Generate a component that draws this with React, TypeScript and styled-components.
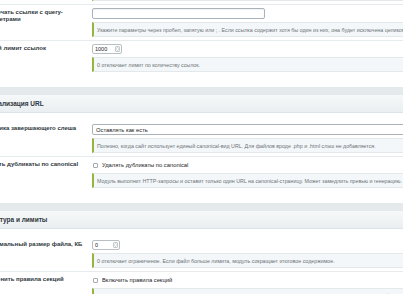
import React from "react";
import styled, { createGlobalStyle } from "styled-components";

const Global = createGlobalStyle`
  html, body { margin: 0; padding: 0; background: #e4e9ec; overflow: hidden; }
  body { font-family: "Liberation Sans", Arial, sans-serif; }
  #root { width: 403px; height: 294px; overflow: hidden; }
`;

const Page = styled.div`
  width: 760px;
  margin: -17px 0 0 -27px;
  display: flex;
  flex-direction: column;
  gap: 8px;
`;

const Section = styled.section`
  background: #fff;
`;

const SectionHeader = styled.div`
  height: 18px;
  box-sizing: border-box;
  display: flex;
  align-items: center;
  padding-left: 8px;
  background: linear-gradient(#f6f8f9, #eaeff1);
  border-bottom: 1px solid #dde4e7;
  font-weight: bold;
  font-size: 6.5px;
  color: #2f373c;
`;

const SectionBody = styled.div<{ $cont?: boolean }>`
  padding: ${(p) => (p.$cont ? 0 : 8)}px 0 12px;
`;

const Row = styled.div<{ $last?: boolean }>`
  display: grid;
  grid-template-columns: 119px 1fr;
  padding: 3px 0;
  border-bottom: ${(p) => (p.$last ? "none" : "1px solid #e6ebee")};
`;

const Label = styled.div`
  padding: 1px 6px 0 8px;
  font-size: 6px;
  line-height: 6.6px;
  font-weight: bold;
  color: #2f373c;
`;

const Field = styled.div`
  display: flex;
  flex-direction: column;
  gap: 3px;
  min-width: 0;
`;

const TextInput = styled.div`
  width: 173px;
  height: 11px;
  box-sizing: border-box;
  border: 1px solid #aab3b9;
  border-radius: 2px;
  background: #fff;
  box-shadow: inset 0 1px 1px rgba(0, 0, 0, 0.06);
`;

const NumberBox = styled.div<{ $w: number }>`
  width: ${(p) => p.$w}px;
  height: 10px;
  box-sizing: border-box;
  border: 1px solid #b7bfc4;
  border-radius: 2px;
  background: #fff;
  display: flex;
  align-items: center;
  justify-content: space-between;
  padding: 0 1px 0 2px;
  font-size: 5.5px;
  color: #222;
`;

const Spin = styled.span`
  width: 5px;
  height: 6px;
  box-sizing: border-box;
  border: 1px solid #c5ccd0;
  border-radius: 1px;
  display: flex;
  align-items: center;
  justify-content: center;
`;

const Select = styled.div`
  height: 11px;
  box-sizing: border-box;
  border: 1px solid #aab3b9;
  border-radius: 2px;
  background: #fff;
  display: flex;
  align-items: center;
  padding-left: 3px;
  font-size: 5.8px;
  color: #222;
`;

const Hint = styled.div`
  height: 15px;
  box-sizing: border-box;
  display: flex;
  align-items: center;
  padding-left: 3px;
  background: #f4f7f9;
  border: 1px solid #e3e8eb;
  border-left: 2px solid #95b53c;
  font-size: 5.3px;
  color: #6b7377;
  white-space: nowrap;
`;

const CheckLine = styled.label`
  height: 10px;
  display: flex;
  align-items: center;
  gap: 4px;
  padding-left: 1px;
  font-size: 5.8px;
  color: #222;
`;

const Box = styled.span`
  width: 5px;
  height: 5px;
  box-sizing: border-box;
  border: 1px solid #a3abb0;
  border-radius: 1px;
  background: #fff;
`;

function Spinner() {
  return (
    <Spin>
      <svg width="3" height="4" viewBox="0 0 3 4">
        <path d="M0.3 1.5 L1.5 0.4 L2.7 1.5 M0.3 2.5 L1.5 3.6 L2.7 2.5" stroke="#8d969b" strokeWidth="0.5" fill="none" />
      </svg>
    </Spin>
  );
}

export default function App() {
  return (
    <>
      <Global />
      <Page>
        <Section>
          <SectionBody $cont>
            <Row>
              <Label />
              <Field>
                <Hint>Ссылки на страницы из этого списка не попадут в карту.</Hint>
              </Field>
            </Row>
            <Row>
              <Label>
                Исключать ссылки с query-
                <br />
                параметрами
              </Label>
              <Field>
                <TextInput />
                <Hint>
                  Укажите параметры через пробел, запятую или ; . Если ссылка содержит хотя бы один из них, она будет исключена целиком.
                </Hint>
              </Field>
            </Row>
            <Row $last>
              <Label>Общий лимит ссылок</Label>
              <Field>
                <NumberBox $w={30}>
                  1000
                  <Spinner />
                </NumberBox>
                <Hint>0 отключает лимит по количеству ссылок.</Hint>
              </Field>
            </Row>
          </SectionBody>
        </Section>

        <Section>
          <SectionHeader>Нормализация URL</SectionHeader>
          <SectionBody>
            <Row>
              <Label>Политика завершающего слеша</Label>
              <Field>
                <Select>Оставлять как есть</Select>
                <Hint>
                  Полезно, когда сайт использует единый canonical-вид URL. Для файлов вроде .php и .html слэш не добавляется.
                </Hint>
              </Field>
            </Row>
            <Row $last>
              <Label>Удалять дубликаты по canonical</Label>
              <Field>
                <CheckLine>
                  <Box />
                  Удалять дубликаты по canonical
                </CheckLine>
                <Hint>
                  Модуль выполнит HTTP-запросы и оставит только один URL на canonical-страницу. Может замедлить превью и генерацию.
                </Hint>
              </Field>
            </Row>
          </SectionBody>
        </Section>

        <Section>
          <SectionHeader>Структура и лимиты</SectionHeader>
          <SectionBody>
            <Row>
              <Label>Максимальный размер файла, КБ</Label>
              <Field>
                <NumberBox $w={28}>
                  0
                  <Spinner />
                </NumberBox>
                <Hint>0 отключает ограничение. Если файл больше лимита, модуль сокращает итоговое содержимое.</Hint>
              </Field>
            </Row>
            <Row $last>
              <Label>Применить правила секций</Label>
              <Field>
                <CheckLine>
                  <Box />
                  Включить правила секций
                </CheckLine>
                <Hint>
                  Если выключить, модуль перестанет раскладывать ссылки по пользовательским секциям и соберёт их в стандартный список.
                </Hint>
              </Field>
            </Row>
          </SectionBody>
        </Section>
      </Page>
    </>
  );
}
